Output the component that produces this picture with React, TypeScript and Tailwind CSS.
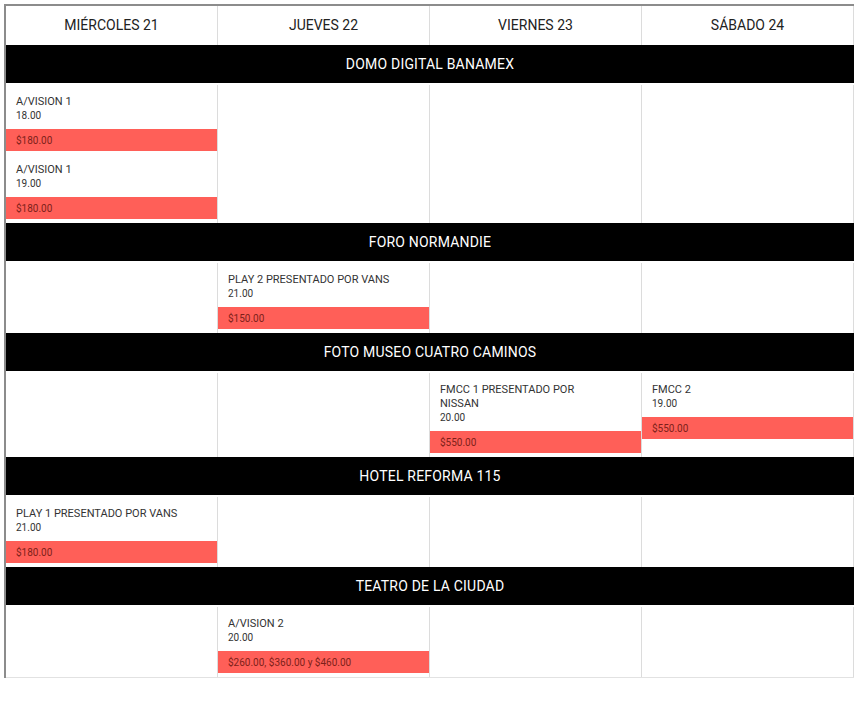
import React from 'react';

interface Show {
  name: string;
  time: string;
  price: string;
}

interface Venue {
  name: string;
  days: Show[][];
}

const days = ['MIÉRCOLES 21', 'JUEVES 22', 'VIERNES 23', 'SÁBADO 24'];

const venues: Venue[] = [
  {
    name: 'DOMO DIGITAL BANAMEX',
    days: [
      [
        { name: 'A/VISION 1', time: '18.00', price: '$180.00' },
        { name: 'A/VISION 1', time: '19.00', price: '$180.00' },
      ],
      [],
      [],
      [],
    ],
  },
  {
    name: 'FORO NORMANDIE',
    days: [[], [{ name: 'PLAY 2 PRESENTADO POR VANS', time: '21.00', price: '$150.00' }], [], []],
  },
  {
    name: 'FOTO MUSEO CUATRO CAMINOS',
    days: [
      [],
      [],
      [{ name: 'FMCC 1 PRESENTADO POR NISSAN', time: '20.00', price: '$550.00' }],
      [{ name: 'FMCC 2', time: '19.00', price: '$550.00' }],
    ],
  },
  {
    name: 'HOTEL REFORMA 115',
    days: [[{ name: 'PLAY 1 PRESENTADO POR VANS', time: '21.00', price: '$180.00' }], [], [], []],
  },
  {
    name: 'TEATRO DE LA CIUDAD',
    days: [[], [{ name: 'A/VISION 2', time: '20.00', price: '$260.00, $360.00 y $460.00' }], [], []],
  },
];

const ShowBlock: React.FC<{ show: Show }> = ({ show }) => (
  <div className="mb-[2px]">
    <div className="px-[10px] pt-[10px] pb-[7px] text-[#333]">
      <p className="text-[11px] leading-[14px] pr-[28px]">{show.name}</p>
      <p className="text-[10px] leading-[13px]">{show.time}</p>
    </div>
    <div className="h-[22px] bg-[#ff5f58] px-[10px] flex items-center text-[10px] text-[#7d1f1a]">
      {show.price}
    </div>
  </div>
);

export default function App() {
  return (
    <div className="bg-white min-h-[702px] pt-[4px] pl-[4px]" style={{ fontFamily: 'Roboto, "Liberation Sans", sans-serif' }}>
      <div className="w-[850px] border-l-2 border-t-2 border-[#8c8c8c]">
        <div className="grid grid-cols-4 h-[39px]">
          {days.map((d) => (
            <div key={d} className="flex items-center justify-center text-[14px] text-[#222] border-r border-[#dcdcdc]">
              {d}
            </div>
          ))}
        </div>
        {venues.map((v, i) => (
          <div key={v.name}>
            <div className="h-[38px] bg-black text-white flex items-center justify-center text-[14px] tracking-[0.2px]">
              {v.name}
            </div>
            <div className={`grid grid-cols-4 mt-[2px] ${i === venues.length - 1 ? 'border-b border-[#e2e2e2]' : ''}`}>
              {v.days.map((shows, j) => (
                <div key={j} className="border-r border-[#dcdcdc] min-h-[70px] pb-[2px]">
                  {shows.map((s, k) => (
                    <ShowBlock key={k} show={s} />
                  ))}
                </div>
              ))}
            </div>
          </div>
        ))}
      </div>
    </div>
  );
}
